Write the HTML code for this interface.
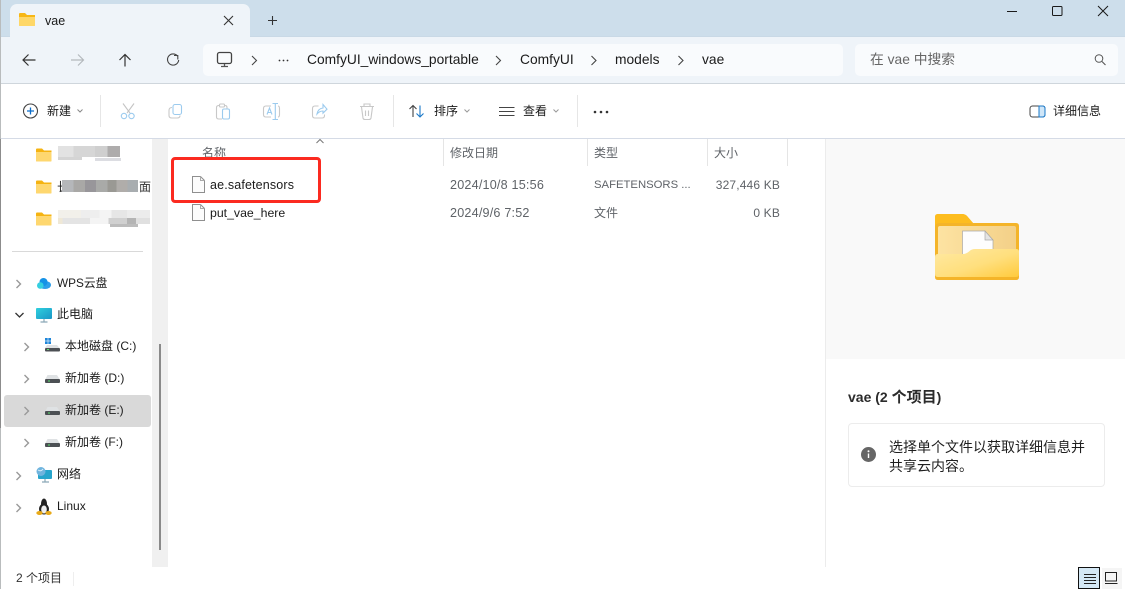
<!DOCTYPE html>
<html><head><meta charset="utf-8">
<style>
html,body{margin:0;padding:0;background:#fff}
#w{position:relative;width:1125px;height:589px;overflow:hidden;background:#fff;font-family:"Liberation Sans","Noto Sans CJK SC",sans-serif;font-size:12px;color:#1b1b1b}
#w div,#w svg{position:absolute}
.t{white-space:nowrap;line-height:16px}
.g{color:#5f6368}
.b{height:4px}
</style></head><body><div id="w">
<!-- title bar -->
<div style="left:0;top:0;width:1125px;height:36px;background:#cddeeb"></div>
<div style="left:0;top:36px;width:1125px;height:47px;background:#eff4f9;border-top:1px solid #c9d9e6;box-sizing:border-box"></div>
<div style="left:10px;top:4px;width:240px;height:33px;background:#eff4f9;border-radius:7px 7px 0 0"></div>
<div style="left:0;top:83px;width:1125px;height:1px;background:#cfd6dc"></div>
<!-- tab -->
<svg style="left:19px;top:12px" width="17" height="15" viewBox="0 0 17 15"><path d="M0 2Q0 1 1 1H6L8 3H16V13Q16 14 15 14H1Q0 14 0 13Z" fill="#f7b716"/><path d="M0 5H16V13Q16 14 15 14H1Q0 14 0 13Z" fill="#fed768"/></svg>
<div class="t" style="left:45px;top:13px;font-size:12.5px">vae</div>
<svg style="left:222px;top:13px" width="14" height="14" viewBox="0 0 14 14"><path d="M2 3L11 12M11 3L2 12" stroke="#333" stroke-width="1.1" fill="none"/></svg>
<svg style="left:266px;top:14px" width="14" height="14" viewBox="0 0 14 14"><path d="M6.500 2V11M2 6.500H11" stroke="#333" stroke-width="1.1" fill="none"/></svg>
<!-- window controls -->
<svg style="left:1000px;top:0" width="125" height="24" viewBox="0 0 125 24" fill="none" stroke="#1a1a1a" stroke-width="1"><path d="M7 11.500H17"/><rect x="52.500" y="6.500" width="9.500" height="9" rx="1"/><path d="M98 6L108 16M108 6L98 16"/></svg>
<!-- nav -->
<svg style="left:20px;top:50px" width="170" height="20" viewBox="0 0 170 20">
<path d="M3 10H15.500M8.500 4.500L3 10L8.500 15.500" stroke="#333" stroke-width="1.2" fill="none"/>
<path d="M51 10H63.500M58 4.500L63.500 10L58 15.500" stroke="#b4b9bd" stroke-width="1.2" fill="none"/>
<path d="M105 16.500V4.500M99.500 10L105 4.500L110.500 10" stroke="#333" stroke-width="1.2" fill="none"/>
<path d="M157.500 6A5.600 5.600 0 1 0 158.700 10M154 5.500H157.800V9.500" stroke="#444" stroke-width="1.1" fill="none"/>
</svg>
<div style="left:203px;top:44px;width:640px;height:32px;background:#f9fbfd;border-radius:5px"></div>
<div style="left:855px;top:44px;width:263px;height:32px;background:#f9fbfd;border-radius:5px"></div>
<svg style="left:215px;top:50px" width="20" height="19" viewBox="0 0 20 19"><rect x="2.500" y="2.500" width="14" height="11" rx="2" fill="none" stroke="#444" stroke-width="1.3"/><path d="M6 16.500H13M9.500 14V16" stroke="#555" stroke-width="1.300"/></svg>
<svg style="left:0;top:53px" width="720" height="14" viewBox="0 0 720 14" fill="none" stroke="#444" stroke-width="1.1"><path d="M252 3L256.500 7.500L252 12"/><path d="M496 3L500.500 7.500L496 12"/><path d="M591.500 3L596 7.500L591.500 12"/><path d="M678.500 3L683 7.500L678.500 12"/><circle cx="279.500" cy="7.500" r=".9" fill="#333" stroke="none"/><circle cx="283.500" cy="7.500" r=".9" fill="#333" stroke="none"/><circle cx="287.500" cy="7.500" r=".9" fill="#333" stroke="none"/></svg>
<div class="t" style="left:307px;top:52px;font-size:13.800px">ComfyUI_windows_portable</div>
<div class="t" style="left:520px;top:52px;font-size:13.800px">ComfyUI</div>
<div class="t" style="left:615px;top:52px;font-size:13.800px">models</div>
<div class="t" style="left:702px;top:52px;font-size:13.800px">vae</div>
<div class="t" style="left:870px;top:52px;font-size:13.800px;color:#666">在 vae 中搜索</div>
<svg style="left:1093px;top:52px" width="14" height="15" viewBox="0 0 14 15"><circle cx="6" cy="6.500" r="3.800" fill="none" stroke="#555" stroke-width="1"/><path d="M9 9.500L12.500 13" stroke="#555" stroke-width="1.100"/></svg>
<!-- toolbar -->
<svg style="left:22px;top:102px" width="18" height="18" viewBox="0 0 18 18"><circle cx="8.500" cy="9" r="7" fill="none" stroke="#444" stroke-width="1.100"/><path d="M8.500 5.500V12.500M5 9H12" stroke="#0a6cc9" stroke-width="1.300"/></svg>
<div class="t" style="left:47px;top:103px">新建</div>
<svg style="left:76px;top:108px" width="9" height="6" viewBox="0 0 9 6"><path d="M1.500 1.500L4 4L6.500 1.500" fill="none" stroke="#888"/></svg>
<div style="left:100px;top:95px;width:1px;height:32px;background:#e6e6e6"></div>
<svg style="left:100px;top:92px" width="290" height="40" viewBox="0 0 290 40" fill="none" stroke-width="1.100">
<path d="M23 11.500L30 21M34 11.500L27 21" stroke="#c4c4c4"/><circle cx="24" cy="24" r="2.700" stroke="#9ccbee"/><circle cx="31.500" cy="24" r="2.700" stroke="#9ccbee"/>
<path d="M72 15.500Q69 15.500 69 18.500V23.500Q69 26 72 26H77Q80 26 80 23.500" stroke="#c8c8c8"/><rect x="73" y="12.500" width="8.500" height="10" rx="2" stroke="#9ccbee"/>
<path d="M127 16.500V15.500Q127 13.500 125 13.500H119Q116.500 13.500 116.500 15.500V25Q116.500 27 119 27H122" stroke="#c8c8c8"/><rect x="119.500" y="12" width="5" height="3" rx="1" fill="#fff" stroke="#c8c8c8"/><rect x="122.500" y="17" width="7" height="10" rx="1.500" stroke="#9ccbee"/>
<path d="M171 14H166Q163.500 14 163.500 16.500V22.500Q163.500 25 166 25H171M178 14Q179.500 14 179.500 16.500V22.500Q179.500 25 178 25" stroke="#c8c8c8"/><path d="M167 22.500L169.500 16L172 22.500M168 20.500H171" stroke="#9ccbee"/><path d="M172.500 11.500H178M175.300 11.500V27.500M172.500 27.500H178" stroke="#9ccbee"/>
<path d="M218.500 14H215Q212.500 14 212.500 16.500V23.500Q212.500 26 215 26H222Q224.500 26 224.500 23.500V22.500" stroke="#c8c8c8"/><path d="M217 22Q218 16.500 223 16V12.500L227 17.200L223 21.200V19Q219.500 19 217 22Z" stroke="#9ccbee"/>
<path d="M260 14.500H274M264 14.500V12H270V14.500M261.500 15L263 26Q263.300 27.500 265 27.500H269Q270.700 27.500 271 26L272.500 15M265.500 18.500V24M268.500 18.500V24" stroke="#c8c8c8"/>
</svg>
<div style="left:393px;top:95px;width:1px;height:32px;background:#e6e6e6"></div>
<svg style="left:408px;top:104px" width="18" height="14" viewBox="0 0 18 14" fill="none" stroke-width="1.100"><path d="M5 13V1.500M1.500 5L5 1.500L8.500 5" stroke="#444"/><path d="M12 1.500V13M8.500 9.500L12 13L15.500 9.500" stroke="#1a78c8"/></svg>
<div class="t" style="left:434px;top:103px">排序</div>
<svg style="left:463px;top:108px" width="9" height="6" viewBox="0 0 9 6"><path d="M1.500 1.500L4 4L6.500 1.500" fill="none" stroke="#999"/></svg>
<svg style="left:498px;top:106px" width="18" height="11" viewBox="0 0 18 11"><path d="M1 1.500H16.500M1 5.500H16.500M1 9.500H16.500" stroke="#444" stroke-width="1"/></svg>
<div class="t" style="left:523px;top:103px">查看</div>
<svg style="left:552px;top:108px" width="9" height="6" viewBox="0 0 9 6"><path d="M1.500 1.500L4 4L6.500 1.500" fill="none" stroke="#999"/></svg>
<div style="left:577px;top:95px;width:1px;height:32px;background:#e6e6e6"></div>
<svg style="left:592px;top:109px" width="18" height="6" viewBox="0 0 18 6"><circle cx="3" cy="3" r="1.300" fill="#333"/><circle cx="9" cy="3" r="1.300" fill="#333"/><circle cx="15" cy="3" r="1.300" fill="#333"/></svg>
<svg style="left:1028px;top:105px" width="18" height="13" viewBox="0 0 18 13"><rect x="2" y="1" width="15" height="11" rx="2.500" fill="none" stroke="#444" stroke-width="1"/><path d="M11 1H14.500Q17 1 17 3.500V9.500Q17 12 14.500 12H11Z" fill="#cfe6f8" stroke="#1a78c8" stroke-width="1"/></svg>
<div class="t" style="left:1053px;top:103px">详细信息</div>
<div style="left:0;top:138px;width:1125px;height:1px;background:#d5dbe6"></div>
<!-- left edge -->
<div style="left:0;top:0;width:1px;height:589px;background:#b9bcbd"></div>
<div style="left:0;top:139px;width:1px;height:289px;background:#8c8c8c"></div>
<!-- sidebar -->
<svg width="0" height="0" style="left:0;top:0"><defs><symbol id="f" viewBox="0 0 16 14"><path d="M0 1.500Q0 .5 1 .5H6L8 2.500H15.500V12.500Q15.500 13.500 14.500 13.500H1Q0 13.500 0 12.500Z" fill="#f5b311"/><path d="M0 4H15.500V12.500Q15.500 13.500 14.500 13.500H1Q0 13.500 0 12.500Z" fill="#fed76f"/></symbol>
<symbol id="d" viewBox="0 0 15 8"><path d="M2.500 0H12L14.500 4H.5Z" fill="#dfe2e4"/><rect x="0" y="4" width="15" height="4" rx="1" fill="#4c5054"/><rect x="3" y="5.500" width="2" height="1" fill="#58e06a"/></symbol>
<symbol id="c" viewBox="0 0 8 10"><path d="M1.500 1L5.500 5L1.500 9" fill="none" stroke="#999" stroke-width="1.400"/></symbol></defs></svg>
<svg style="left:36px;top:148px" width="16" height="14"><use href="#f"/></svg>
<svg style="left:36px;top:180px" width="16" height="14"><use href="#f"/></svg>
<svg style="left:36px;top:212px" width="16" height="14"><use href="#f"/></svg>
<!-- blurred row 1 -->
<div style="left:58px;top:146px;width:62px;height:11px;background:linear-gradient(90deg,#e2e2e2 0 25%,#d6d6d6 25% 60%,#cfcfcf 60% 80%,#aeacac 80%)"></div>
<div style="left:58px;top:157px;width:24px;height:3px;background:#d4d4d4"></div>
<div style="left:95px;top:158px;width:26px;height:3px;background:#dcdde2"></div>
<!-- blurred row 2 -->
<div class="t" style="left:57px;top:179px;width:5px;overflow:hidden">长</div>
<div class="t" style="left:138px;top:179px;width:13px;overflow:hidden;text-indent:1px;color:#333">面</div>
<div style="left:62px;top:180px;width:76px;height:12px;background:linear-gradient(90deg,#b5b7ba 0 15%,#a9a8a6 15% 30%,#98969a 30% 45%,#a9aaa8 45% 60%,#9a9994 60% 72%,#b0adaa 72% 86%,#a8adb0 86%)"></div>
<!-- blurred row 3 -->
<div style="left:58px;top:210px;width:92px;height:8px;background:linear-gradient(90deg,#f2f0ea 0 25%,#eeeeee 25% 45%,#f4f4f4 45% 58%,#e6e6e6 58% 75%,#ececec 75%)"></div>
<div style="left:58px;top:218px;width:92px;height:6px;background:linear-gradient(90deg,#efe8d6 0 5%,#e4e4e4 5% 35%,#f4f4f4 35% 55%,#d0d0d0 55% 75%,#b4b4b4 75% 85%,#e0e0e0 85%)"></div>
<div style="left:110px;top:224px;width:28px;height:3px;background:#bcbcbc"></div>
<div style="left:12px;top:251px;width:131px;height:1px;background:#d9d9d9"></div>
<div style="left:152px;top:139px;width:16px;height:428px;background:#f0f0f0"></div>
<div style="left:159px;top:344px;width:2px;height:206px;background:#8a8a8a"></div>
<div style="left:4px;top:395px;width:147px;height:32px;background:#d9d9d9;border-radius:3px"></div>
<svg style="left:15px;top:279px" width="8" height="10"><use href="#c"/></svg>
<svg style="left:15px;top:312px" width="9" height="7" viewBox="0 0 9 7"><path d="M.5 1L4.500 5L8.500 1" fill="none" stroke="#333" stroke-width="1.300"/></svg>
<svg style="left:23px;top:342px" width="8" height="10"><use href="#c"/></svg>
<svg style="left:23px;top:374px" width="8" height="10"><use href="#c"/></svg>
<svg style="left:23px;top:406px" width="8" height="10"><use href="#c"/></svg>
<svg style="left:23px;top:438px" width="8" height="10"><use href="#c"/></svg>
<svg style="left:15px;top:471px" width="8" height="10"><use href="#c"/></svg>
<svg style="left:15px;top:503px" width="8" height="10"><use href="#c"/></svg>
<svg style="left:37px;top:278px" width="14" height="11" viewBox="0 0 14 11"><ellipse cx="8" cy="7" rx="6" ry="4" fill="#2f9fea"/><circle cx="6.500" cy="4" r="4" fill="#1592e6"/><circle cx="3.300" cy="7.500" r="3.300" fill="#35cfe0"/></svg>
<svg style="left:36px;top:308px" width="16" height="15" viewBox="0 0 16 15"><defs><linearGradient id="p" x1="0" y1="0" x2="1" y2="1"><stop offset="0" stop-color="#2fd0de"/><stop offset="1" stop-color="#1a96c6"/></linearGradient></defs><rect width="16" height="11" rx="1" fill="url(#p)"/><path d="M8 11V13.500M4.500 14H11.500" stroke="#8aa8b6" stroke-width="1.200"/></svg>
<svg style="left:44px;top:338px" width="16" height="15" viewBox="0 0 16 15"><rect x="1" y="0" width="2.700" height="2.700" fill="#1f86d9"/><rect x="4.300" y="0" width="2.700" height="2.700" fill="#1f86d9"/><rect x="1" y="3.300" width="2.700" height="2.700" fill="#1f86d9"/><rect x="4.300" y="3.300" width="2.700" height="2.700" fill="#1f86d9"/><path d="M3 7H13L15.500 10H1Z" fill="#dfe2e4"/><rect x="1" y="10" width="15" height="3.500" rx="1" fill="#4c5054"/><rect x="3" y="11" width="2" height="1" fill="#58e06a"/></svg>
<svg style="left:45px;top:375px" width="15" height="8"><use href="#d"/></svg>
<svg style="left:45px;top:407px" width="15" height="8"><use href="#d"/></svg>
<svg style="left:45px;top:439px" width="15" height="8"><use href="#d"/></svg>
<svg style="left:36px;top:467px" width="17" height="16" viewBox="0 0 17 16"><rect x="2" y="3" width="14" height="9" rx="1" fill="#27a5cc"/><circle cx="5" cy="4.500" r="4.500" fill="#6fb4de"/><path d="M2 3Q5 5 7 2" stroke="#d6eefb" fill="none"/><path d="M9 12V14.500M6 15H13" stroke="#8aa8b6" stroke-width="1.200"/></svg>
<svg style="left:36px;top:498px" width="16" height="18" viewBox="0 0 16 18"><ellipse cx="8" cy="6" rx="3" ry="5.500" fill="#222"/><ellipse cx="8" cy="11" rx="5" ry="5.500" fill="#222"/><ellipse cx="8" cy="11.500" rx="2.800" ry="4" fill="#eee"/><ellipse cx="3.500" cy="15" rx="3.200" ry="2" fill="#e8a917"/><ellipse cx="12.500" cy="15" rx="3.200" ry="2" fill="#e8a917"/></svg>
<div class="t" style="left:57px;top:275px;font-size:11.800px">WPS云盘</div>
<div class="t" style="left:57px;top:306px">此电脑</div>
<div class="t" style="left:65px;top:338px">本地磁盘 (C:)</div>
<div class="t" style="left:65px;top:370px">新加卷 (D:)</div>
<div class="t" style="left:65px;top:402px">新加卷 (E:)</div>
<div class="t" style="left:65px;top:434px">新加卷 (F:)</div>
<div class="t" style="left:57px;top:466px">网络</div>
<div class="t" style="left:57px;top:498px">Linux</div>
<div class="t" style="left:16px;top:570px;color:#333">2 个项目</div>
<div style="left:73px;top:572px;width:1px;height:14px;background:#eee"></div>
<!-- headers -->
<div class="t g" style="left:202px;top:145px">名称</div>
<svg style="left:315px;top:138px" width="10" height="6" viewBox="0 0 10 6"><path d="M1.500 5L5 1.500L8.500 5" fill="none" stroke="#777"/></svg>
<div style="left:443px;top:139px;width:1px;height:27px;background:#e5e5e5"></div>
<div style="left:587px;top:139px;width:1px;height:27px;background:#e5e5e5"></div>
<div style="left:707px;top:139px;width:1px;height:27px;background:#e5e5e5"></div>
<div style="left:787px;top:139px;width:1px;height:27px;background:#e5e5e5"></div>
<div class="t g" style="left:450px;top:145px">修改日期</div>
<div class="t g" style="left:594px;top:145px">类型</div>
<div class="t g" style="left:714px;top:145px">大小</div>
<!-- files -->
<svg style="left:192px;top:176px" width="13" height="17" viewBox="0 0 13 17"><path d="M.5 .5H8.500L12.500 4.500V16.500H.5Z" fill="#fcfcfc" stroke="#8f8f8f"/><path d="M8.500 .5V4.500H12.500" fill="none" stroke="#aaa"/></svg>
<svg style="left:192px;top:204px" width="13" height="17" viewBox="0 0 13 17"><path d="M.5 .5H8.500L12.500 4.500V16.500H.5Z" fill="#fcfcfc" stroke="#8f8f8f"/><path d="M8.500 .5V4.500H12.500" fill="none" stroke="#aaa"/></svg>
<div class="t" style="left:210px;top:177px;font-size:12.500px;letter-spacing:.15px">ae.safetensors</div>
<div class="t" style="left:210px;top:205px;font-size:12.300px">put_vae_here</div>
<div class="t g" style="left:450px;top:177px;font-size:12.600px;letter-spacing:.2px">2024/10/8 15:56</div>
<div class="t g" style="left:450px;top:205px;font-size:12.600px;letter-spacing:.2px">2024/9/6 7:52</div>
<div class="t g" style="left:594px;top:177px;font-size:11.300px">SAFETENSORS ...</div>
<div class="t g" style="left:594px;top:205px">文件</div>
<div class="t g" style="right:345px;top:177px;letter-spacing:.15px">327,446 KB</div>
<div class="t g" style="right:345px;top:205px;letter-spacing:.15px">0 KB</div>
<div style="left:171px;top:157px;width:150px;height:46px;box-sizing:border-box;border:3px solid #fb2a20;border-radius:4px"></div>
<!-- right pane -->
<div style="left:825px;top:139px;width:1px;height:428px;background:#ececec"></div>
<div style="left:826px;top:139px;width:299px;height:220px;background:#f9f9f9"></div>
<svg style="left:935px;top:213px" width="85" height="68" viewBox="0 0 85 68">
<defs><linearGradient id="fr" x1="0" y1="0" x2="1" y2="1"><stop offset="0" stop-color="#ffe9a3"/><stop offset=".55" stop-color="#ffdf7d"/><stop offset="1" stop-color="#ffca3c"/></linearGradient><linearGradient id="in" x1="0" y1="0" x2="1" y2="0"><stop offset="0" stop-color="#fde3a2"/><stop offset="1" stop-color="#f3d088"/></linearGradient></defs>
<path d="M0 4Q0 1 3 1H27Q30 1 32 3L38 10H81Q84 10 84 13V64Q84 67 81 67H3Q0 67 0 64Z" fill="#f4b429"/>
<path d="M0 4Q0 1 3 1H27Q30 1 32 3L38 10H4Q0 10 0 15Z" fill="#fdbd1f"/>
<rect x="3" y="13" width="78" height="32" rx="2" fill="url(#in)"/>
<path d="M27.500 18H50L58 27V42H27.500Z" fill="#fdfdfd" stroke="#a8a8a8" stroke-width=".7"/>
<path d="M50 18V27H58Z" fill="#e4e4e4" stroke="#a8a8a8" stroke-width=".7"/>
<path d="M0 44Q0 41 3 41H28Q31 41 34 38.500Q36.500 36 40 36H81Q84 36 84 38.500V61Q84 64 81 64H3Q0 64 0 61Z" fill="url(#fr)"/>
</svg>
<div class="t" style="left:848px;top:388px;font-size:14px;font-weight:bold;color:#2b2b2b;line-height:18px">vae (2 <span style="font-size:15px">个项目</span>)</div>
<div style="left:848px;top:423px;width:257px;height:64px;box-sizing:border-box;border:1px solid #ececec;border-radius:4px;background:#fff"></div>
<svg style="left:861px;top:447px" width="15" height="15" viewBox="0 0 15 15"><circle cx="7.500" cy="7.500" r="7.500" fill="#666"/><path d="M7.500 6.500V11" stroke="#fff" stroke-width="1.400"/><circle cx="7.500" cy="4.200" r="1" fill="#fff"/></svg>
<div class="t" style="left:889px;top:438px;font-size:14px;line-height:19px;color:#1f1f1f">选择单个文件以获取详细信息并<br>共享云内容。</div>
<!-- bottom view buttons -->
<div style="left:1102px;top:568px;width:20px;height:21px;background:#f5f5f5"></div>
<div style="left:1078px;top:567px;width:22px;height:22px;box-sizing:border-box;border:1px solid #111;background:#d4e8f5"></div>
<svg style="left:1084px;top:574px" width="13" height="11" viewBox="0 0 13 11"><path d="M0 .5H12M0 3.500H12M0 6.500H12M0 9.500H12" stroke="#222" stroke-width="1"/></svg>
<svg style="left:1105px;top:572px" width="13" height="13" viewBox="0 0 13 13"><path d="M.5 .5H11.500V9H.5ZM0 11.500H12.500" fill="none" stroke="#222" stroke-width="1"/></svg>
</div></body></html>
